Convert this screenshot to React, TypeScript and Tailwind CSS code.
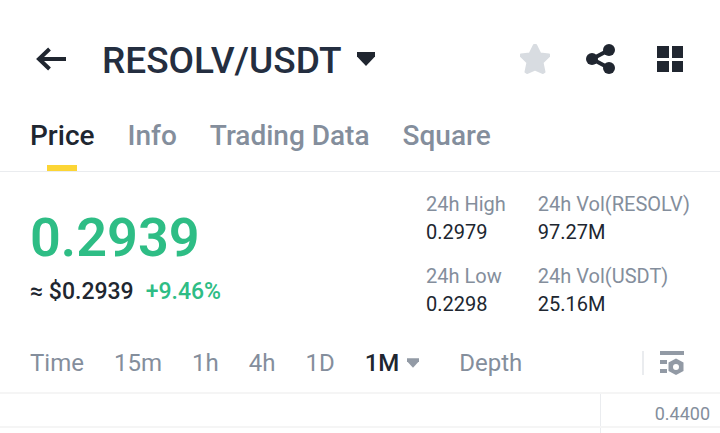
import {useState} from 'react';
import clsx from 'clsx';

const tabs = ['Price', 'Info', 'Trading Data', 'Square'];

const intervals = ['Time', '15m', '1h', '4h', '1D', '1M'];

const stats = [
  [
    {label: '24h High', value: '0.2979'},
    {label: '24h Low', value: '0.2298'},
  ],
  [
    {label: '24h Vol(RESOLV)', value: '97.27M'},
    {label: '24h Vol(USDT)', value: '25.16M'},
  ],
];

function IconBack() {
  return (
    <svg width="30" height="24" viewBox="0 0 30 24" fill="none" aria-hidden="true">
      <path d="M30 12H3M13.500 2L3 12L13.500 22" stroke="#202630" strokeWidth="4" />
    </svg>
  );
}

function IconCaret({className}: {className?: string}) {
  return (
    <svg viewBox="0 0 18 14" className={className} fill="currentColor" aria-hidden="true">
      <path d="M0 0H18V4.500L9 14L0 4.500Z" />
    </svg>
  );
}

function IconStar() {
  return (
    <svg width="30" height="30" viewBox="0 0 30 30" fill="#d8dce1" stroke="#d8dce1" strokeWidth="2" strokeLinejoin="round" aria-hidden="true">
      <path d="M14 1h2l4.200 8.400 8.800 1.200v1.800l-6.400 6.200 1.900 9.400-1.500 1L15 25.500 7 29l-1.500-1 1.900-9.400L1 12.400v-1.800l8.800-1.200z" />
    </svg>
  );
}

function IconShare() {
  return (
    <svg width="30" height="30" viewBox="0 0 30 30" fill="#202630" aria-hidden="true">
      <path d="M23 6L6 15L23 24" fill="none" stroke="#202630" strokeWidth="4" />
      <circle cx="6" cy="15" r="6" />
      <circle cx="23" cy="6" r="6" />
      <circle cx="23" cy="24" r="6" />
    </svg>
  );
}

function IconGrid() {
  return (
    <svg width="28" height="28" viewBox="0 0 28 28" fill="#202630" aria-hidden="true">
      <path d="M1 1h12v12H1zM16 1h11v12H16zM1 16h12v11H1zM16 16h11v11H16z" />
    </svg>
  );
}

function IconChartSettings() {
  return (
    <svg width="24" height="24" viewBox="0 0 24 24" fill="#929aa5" aria-hidden="true">
      <path d="M0 0h24v4H0zM0 9h7v4H0zM0 18h7v4H0z" />
      <path fillRule="evenodd" d="M16 7.500l7.500 4v8.500L16 24l-7.500-4v-8.500zM16 13a3 3 0 1 0 0 6a3 3 0 1 0 0-6z" />
    </svg>
  );
}

export default function App() {
  const [tab, setTab] = useState('Price');
  const [interval, setInterval] = useState('1M');

  return (
    <div className="bg-white text-[#202630] font-['Roboto',sans-serif] overflow-hidden">
      <header className="flex items-center px-9 pt-[35px]">
        <button type="button" aria-label="Back">
          <IconBack />
        </button>
        <button type="button" className="flex items-center gap-4 ml-9">
          <span className="pt-1 text-[37px] leading-[44px] font-medium text-[#242e40]">RESOLV/USDT</span>
          <IconCaret className="w-[18px] h-[14px]" />
        </button>
        <div className="flex items-center gap-9 ml-auto">
          <button type="button" aria-label="Add to favorites">
            <IconStar />
          </button>
          <button type="button" aria-label="Share">
            <IconShare />
          </button>
          <button type="button" aria-label="More" className="ml-1">
            <IconGrid />
          </button>
        </div>
      </header>

      <nav className="flex gap-[33px] px-[30px] pt-[33px] border-b border-[#eaecef]">
        {tabs.map((name) => (
          <button
            key={name}
            type="button"
            className={clsx(
              'flex flex-col items-center text-[28px] leading-[40px] font-medium',
              tab === name ? 'text-[#202630]' : 'text-[#848e9c]',
            )}
            onClick={() => setTab(name)}
          >
            {name}
            <span className={clsx('w-[30px] h-[6px] mt-[9px]', tab === name && 'bg-[#fcd535]')} />
          </button>
        ))}
      </nav>

      <section className="flex justify-between px-[30px] pt-[18px]">
        <div className="pt-[18px]">
          <div className="text-[54px] leading-[60px] font-semibold text-[#2ebd85]">0.2939</div>
          <div className="flex gap-3 pt-2 text-[23px] leading-[32px] font-medium">
            <span>≈ $0.2939</span>
            <span className="text-[#2ebd85]">+9.46%</span>
          </div>
        </div>
        <div className="flex gap-8">
          {stats.map((column, index) => (
            <dl key={index} className="text-[20px] leading-[28px]">
              {column.map(({label, value}) => (
                <div key={label} className="pb-4">
                  <dt className="text-[#848e9c]">{label}</dt>
                  <dd>{value}</dd>
                </div>
              ))}
            </dl>
          ))}
        </div>
      </section>

      <div className="flex items-center pl-[30px] pr-9 pt-[13px] pb-[13px] text-[24px] leading-[32px] text-[#848e9c]">
        <div className="flex items-center gap-[30px]">
          {intervals.map((name) => (
            <button
              key={name}
              type="button"
              className={clsx('flex items-center gap-2', interval === name && 'font-medium text-[#202630]')}
              onClick={() => setInterval(name)}
            >
              {name}
              {name === '1M' && <IconCaret className="w-3 h-[10px] mr-[10px] text-[#929aa5]" />}
            </button>
          ))}
          <button type="button">Depth</button>
        </div>
        <button type="button" aria-label="Chart settings" className="ml-auto pl-4 border-l-2 border-[#eaecef]">
          <IconChartSettings />
        </button>
      </div>

      <div className="border-t-2 border-[#f5f5f5]">
        <div className="flex border-b-2 border-[#f5f5f5]">
          <div className="flex-1" />
          <div className="w-[120px] border-l border-[#eaecef] pt-2 pr-[10px] text-right text-[18px] leading-[24px] text-[#848e9c]">
            0.4400
          </div>
        </div>
        <div className="flex h-[5px]">
          <div className="flex-1" />
          <div className="w-[120px] border-l border-[#eaecef]" />
        </div>
      </div>
    </div>
  );
}
